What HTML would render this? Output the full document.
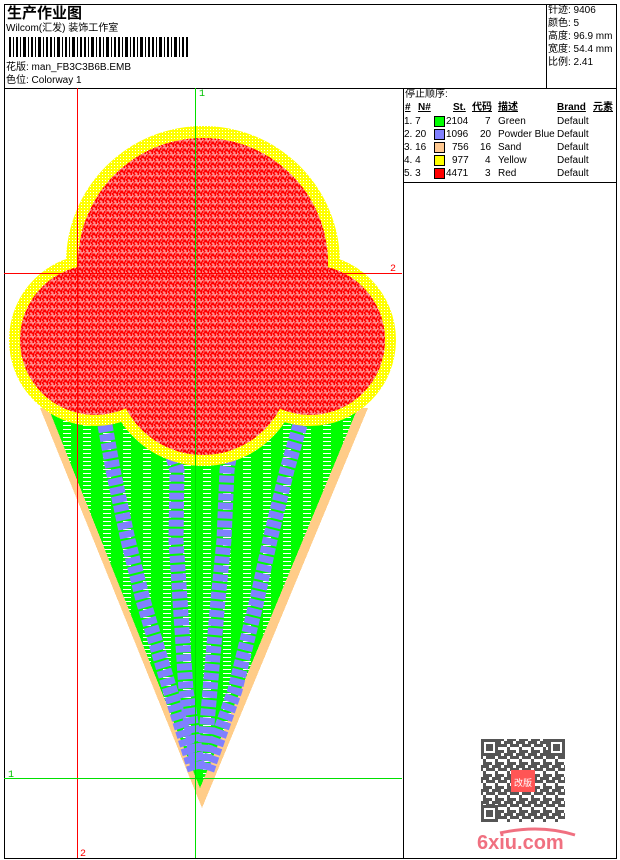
<!DOCTYPE html>
<html><head><meta charset="utf-8"><style>
body{margin:0;background:#fff;width:620px;height:860px;position:relative;overflow:hidden;font-family:"Liberation Sans","Noto Sans CJK SC",sans-serif;font-size:10px;color:#000}
.a{position:absolute;white-space:nowrap;line-height:12px}
.sw{position:absolute;width:9px;height:9px;border:1px solid #000}
</style></head><body>
<svg width="620" height="860" style="position:absolute;left:0;top:0" shape-rendering="crispEdges">
<defs>
<pattern id="rp" width="7" height="7" patternUnits="userSpaceOnUse">
<rect width="7" height="7" fill="#fff"/>
<path d="M0 6L3 2L5 5L7 1M1 0L1 3L4 4M5 7L6 4M2 7L0 4" stroke="#f00" stroke-width="1.3" fill="none"/>
</pattern>
<pattern id="gp" width="20" height="4" patternUnits="userSpaceOnUse">
<rect width="20" height="4" fill="#00ff00"/>
<rect x="3" y="1" width="8" height="1" fill="#fff"/>
</pattern>
<pattern id="yp" width="3" height="3" patternUnits="userSpaceOnUse">
<rect width="3" height="3" fill="#ffff00"/><rect width="1" height="1" fill="#fff"/>
</pattern>
<pattern id="qp" width="12" height="12" patternUnits="userSpaceOnUse">
<rect width="12" height="12" fill="#fff"/>
<rect x="0" y="0" width="3" height="3" fill="#555"/><rect x="6" y="0" width="6" height="3" fill="#555"/><rect x="3" y="3" width="3" height="6" fill="#555"/><rect x="9" y="6" width="3" height="3" fill="#555"/><rect x="0" y="9" width="6" height="3" fill="#555"/><rect x="6" y="6" width="3" height="6" fill="#555"/>
</pattern>
</defs>
<rect x="4.5" y="4.5" width="612" height="854" fill="none" stroke="#000"/>
<rect x="4" y="88" width="612" height="1" fill="#000"/>
<rect x="546" y="4" width="1" height="84" fill="#000"/>
<rect x="403" y="88" width="1" height="770" fill="#000"/>
<rect x="403" y="182" width="213" height="1" fill="#000"/>
<!-- cone -->
<polygon points="40,408 368,408 202,808" fill="#ffcc88"/>
<polygon points="50,412 356,412 200,788" fill="url(#gp)"/>
<g stroke="#8080ff" stroke-width="15" fill="none" stroke-dasharray="7 2" shape-rendering="auto">
<path d="M105 425 L113 470 L128 540 L143 600 L170 690 L195 770"/>
<path d="M168 440 L177 470 L176 540 L180 600 L186 690 L198 770"/>
<path d="M232 440 L227 470 L224 540 L218 600 L210 690 L203 770"/>
<path d="M300 425 L287 470 L270 540 L257 600 L235 690 L207 770"/>
</g>
<!-- scoop outline -->
<g fill="url(#yp)" shape-rendering="auto">
<circle cx="203" cy="263" r="137"/>
<circle cx="95" cy="340" r="86"/>
<circle cx="310" cy="340" r="86"/>
<circle cx="203" cy="368" r="98"/>
</g>
<g fill="url(#rp)" shape-rendering="auto">
<circle cx="203" cy="263" r="125"/>
<circle cx="95" cy="340" r="75"/>
<circle cx="310" cy="340" r="75"/>
<circle cx="203" cy="368" r="87"/>
</g>
<g fill="#f00" opacity="0.45" shape-rendering="auto">
<circle cx="203" cy="263" r="125"/>
<circle cx="95" cy="340" r="75"/>
<circle cx="310" cy="340" r="75"/>
<circle cx="203" cy="368" r="87"/>
</g>
<!-- guide lines -->
<rect x="77" y="88" width="1" height="770" fill="#f00"/>
<rect x="4" y="273" width="398" height="1" fill="#f00"/>
<rect x="195" y="88" width="1" height="770" fill="#00e000"/>
<rect x="4" y="778" width="398" height="1" fill="#00e000"/>
<text x="199" y="96" font-size="10" fill="#00c000" font-family="Liberation Mono">1</text>
<text x="8" y="777" font-size="10" fill="#00c000" font-family="Liberation Mono">1</text>
<text x="390" y="271" font-size="10" fill="#f00" font-family="Liberation Mono">2</text>
<text x="80" y="856" font-size="10" fill="#f00" font-family="Liberation Mono">2</text>
<!-- barcode -->
<g fill="#000">
<rect x="9" y="37" width="2" height="20"/><rect x="13" y="37" width="1" height="20"/><rect x="16" y="37" width="2" height="20"/><rect x="20" y="37" width="1" height="20"/><rect x="23" y="37" width="3" height="20"/><rect x="28" y="37" width="1" height="20"/><rect x="31" y="37" width="2" height="20"/><rect x="35" y="37" width="1" height="20"/><rect x="38" y="37" width="3" height="20"/><rect x="43" y="37" width="1" height="20"/><rect x="46" y="37" width="2" height="20"/><rect x="50" y="37" width="2" height="20"/><rect x="54" y="37" width="1" height="20"/><rect x="57" y="37" width="3" height="20"/><rect x="62" y="37" width="1" height="20"/><rect x="65" y="37" width="2" height="20"/><rect x="69" y="37" width="1" height="20"/><rect x="72" y="37" width="3" height="20"/><rect x="77" y="37" width="1" height="20"/><rect x="80" y="37" width="2" height="20"/><rect x="84" y="37" width="2" height="20"/><rect x="88" y="37" width="1" height="20"/><rect x="91" y="37" width="3" height="20"/><rect x="96" y="37" width="1" height="20"/><rect x="99" y="37" width="2" height="20"/><rect x="103" y="37" width="1" height="20"/><rect x="106" y="37" width="3" height="20"/><rect x="111" y="37" width="1" height="20"/><rect x="114" y="37" width="2" height="20"/><rect x="118" y="37" width="2" height="20"/><rect x="122" y="37" width="1" height="20"/><rect x="125" y="37" width="3" height="20"/><rect x="130" y="37" width="1" height="20"/><rect x="133" y="37" width="2" height="20"/><rect x="137" y="37" width="1" height="20"/><rect x="140" y="37" width="3" height="20"/><rect x="145" y="37" width="1" height="20"/><rect x="148" y="37" width="2" height="20"/><rect x="152" y="37" width="2" height="20"/><rect x="156" y="37" width="1" height="20"/><rect x="159" y="37" width="3" height="20"/><rect x="164" y="37" width="1" height="20"/><rect x="167" y="37" width="2" height="20"/><rect x="171" y="37" width="1" height="20"/><rect x="174" y="37" width="3" height="20"/><rect x="179" y="37" width="1" height="20"/><rect x="182" y="37" width="2" height="20"/><rect x="186" y="37" width="2" height="20"/>
</g>
<!-- QR -->
<rect x="481" y="739" width="84" height="83" fill="url(#qp)"/>
<g fill="#555">
<rect x="481" y="739" width="17" height="17"/><rect x="484" y="742" width="11" height="11" fill="#fff"/><rect x="486" y="744" width="7" height="7"/>
<rect x="548" y="739" width="17" height="17"/><rect x="551" y="742" width="11" height="11" fill="#fff"/><rect x="553" y="744" width="7" height="7"/>
<rect x="481" y="805" width="17" height="17"/><rect x="484" y="808" width="11" height="11" fill="#fff"/><rect x="486" y="810" width="7" height="7"/>
</g>
<rect x="511" y="770" width="24" height="22" fill="#f55"/>
<text x="523" y="786" font-size="9" fill="#fff" text-anchor="middle" font-family="Noto Sans CJK SC">改版</text>
<text x="477" y="849" font-size="20" font-weight="bold" fill="#f07080" font-family="Liberation Sans">6xiu.com</text>
<path d="M500 833 Q540 824 575 835" stroke="#f07080" stroke-width="3" fill="none" shape-rendering="auto"/>
</svg>
<div class="a" style="left:7px;top:4px;font-size:15px;line-height:17px;font-weight:bold;font-family:'Noto Sans CJK SC',sans-serif">生产作业图</div>
<div class="a" style="left:6px;top:23px">Wilcom(汇发) 装饰工作室</div>
<div class="a" style="left:6px;top:62px">花版: man_FB3C3B6B.EMB</div>
<div class="a" style="left:6px;top:75px">色位: Colorway 1</div>
<div class="a" style="left:548px;top:5px">针迹: 9406</div>
<div class="a" style="left:548px;top:18px">颜色: 5</div>
<div class="a" style="left:548px;top:31px">高度: 96.9 mm</div>
<div class="a" style="left:548px;top:44px">宽度: 54.4 mm</div>
<div class="a" style="left:548px;top:57px">比例: 2.41</div>
<div class="a" style="left:405px;top:89px">停止顺序:</div>
<div class="a" style="left:405px;top:102px;font-weight:bold;text-decoration:underline">#</div>
<div class="a" style="left:418px;top:102px;font-weight:bold;text-decoration:underline">N#</div>
<div class="a" style="left:453px;top:102px;font-weight:bold;text-decoration:underline">St.</div>
<div class="a" style="left:472px;top:102px;font-weight:bold;text-decoration:underline">代码</div>
<div class="a" style="left:498px;top:102px;font-weight:bold;text-decoration:underline">描述</div>
<div class="a" style="left:557px;top:102px;font-weight:bold;text-decoration:underline">Brand</div>
<div class="a" style="left:593px;top:102px;font-weight:bold;text-decoration:underline">元素</div>

<div class="a" style="left:404px;top:116px">1.&nbsp;7</div><div class="sw" style="left:434px;top:116px;background:#00ff00"></div><div class="a" style="left:446px;top:116px">2104</div><div class="a" style="left:485px;top:116px">7</div><div class="a" style="left:498px;top:116px">Green</div><div class="a" style="left:557px;top:116px">Default</div>
<div class="a" style="left:404px;top:129px">2.&nbsp;20</div><div class="sw" style="left:434px;top:129px;background:#8080ff"></div><div class="a" style="left:446px;top:129px">1096</div><div class="a" style="left:480px;top:129px">20</div><div class="a" style="left:498px;top:129px">Powder Blue</div><div class="a" style="left:557px;top:129px">Default</div>
<div class="a" style="left:404px;top:142px">3.&nbsp;16</div><div class="sw" style="left:434px;top:142px;background:#ffc890"></div><div class="a" style="left:452px;top:142px">756</div><div class="a" style="left:480px;top:142px">16</div><div class="a" style="left:498px;top:142px">Sand</div><div class="a" style="left:557px;top:142px">Default</div>
<div class="a" style="left:404px;top:155px">4.&nbsp;4</div><div class="sw" style="left:434px;top:155px;background:#ffff00"></div><div class="a" style="left:452px;top:155px">977</div><div class="a" style="left:485px;top:155px">4</div><div class="a" style="left:498px;top:155px">Yellow</div><div class="a" style="left:557px;top:155px">Default</div>
<div class="a" style="left:404px;top:168px">5.&nbsp;3</div><div class="sw" style="left:434px;top:168px;background:#ff0000"></div><div class="a" style="left:446px;top:168px">4471</div><div class="a" style="left:485px;top:168px">3</div><div class="a" style="left:498px;top:168px">Red</div><div class="a" style="left:557px;top:168px">Default</div>
</body></html>
